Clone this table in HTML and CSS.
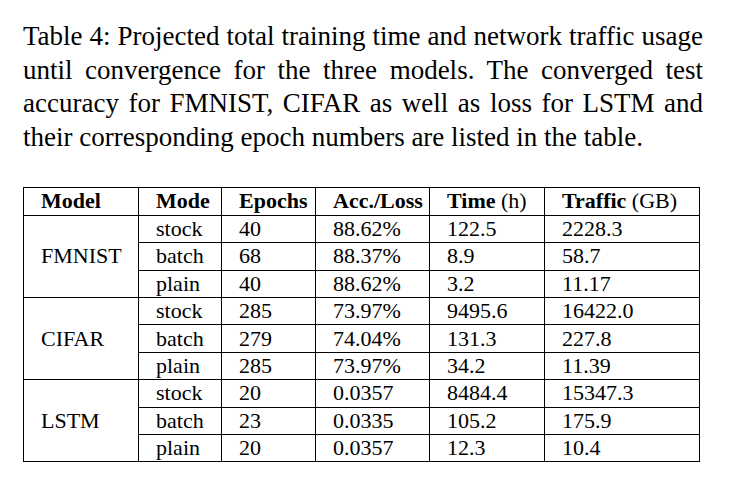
FILE: index.html
```html
<!DOCTYPE html>
<html>
<head>
<meta charset="utf-8">
<link rel="stylesheet" href="styles.css">
</head>
<body>
<div class="page">
  <p class="caption">Table 4: Projected total training time and network traffic usage until convergence for the three models. The converged test accuracy for FMNIST, CIFAR as well as loss for LSTM and their corresponding epoch numbers are listed in the table.</p>
  <table class="results">
    <colgroup>
      <col class="c-model"><col class="c-mode"><col class="c-epochs"><col class="c-acc"><col class="c-time"><col class="c-traffic">
    </colgroup>
    <thead>
      <tr class="head">
        <th>Model</th><th>Mode</th><th>Epochs</th><th>Acc./Loss</th><th>Time <span class="unit">(h)</span></th><th>Traffic <span class="unit">(GB)</span></th>
      </tr>
    </thead>
    <tbody>
      <tr><td rowspan="3" class="model">FMNIST</td><td>stock</td><td>40</td><td>88.62%</td><td>122.5</td><td>2228.3</td></tr>
      <tr><td>batch</td><td>68</td><td>88.37%</td><td>8.9</td><td>58.7</td></tr>
      <tr><td>plain</td><td>40</td><td>88.62%</td><td>3.2</td><td>11.17</td></tr>
      <tr><td rowspan="3" class="model">CIFAR</td><td>stock</td><td>285</td><td>73.97%</td><td>9495.6</td><td>16422.0</td></tr>
      <tr><td>batch</td><td>279</td><td>74.04%</td><td>131.3</td><td>227.8</td></tr>
      <tr><td>plain</td><td>285</td><td>73.97%</td><td>34.2</td><td>11.39</td></tr>
      <tr><td rowspan="3" class="model">LSTM</td><td>stock</td><td>20</td><td>0.0357</td><td>8484.4</td><td>15347.3</td></tr>
      <tr><td>batch</td><td>23</td><td>0.0335</td><td>105.2</td><td>175.9</td></tr>
      <tr><td>plain</td><td>20</td><td>0.0357</td><td>12.3</td><td>10.4</td></tr>
    </tbody>
  </table>
</div>
</body>
</html>
```

FILE: styles.css
```css
html, body {
  margin: 0;
  padding: 0;
  background: #fff;
}

body {
  font-family: "Liberation Serif", "Times New Roman", serif;
  color: #000;
}

.page {
  padding: 20px 0 0 23px;
}

.caption {
  margin: 0;
  width: 680px;
  font-size: 27px;
  line-height: 33.7px;
  text-align: justify;
}

.results {
  margin-top: 32px;
  border-collapse: collapse;
  table-layout: fixed;
  width: 676px;
  font-size: 22px;
}

.c-model { width: 115px; }
.c-mode { width: 83px; }
.c-epochs { width: 94px; }
.c-acc { width: 114px; }
.c-time { width: 115px; }
.c-traffic { width: 155px; }

.results th,
.results td {
  border: 1px solid #000;
  padding: 0 0 0 17px;
  text-align: left;
  vertical-align: middle;
  line-height: 26px;
  white-space: nowrap;
}

.results th {
  font-weight: bold;
}

.results .unit {
  font-weight: normal;
}

.results tr.head {
  height: 28px;
}

.results tbody tr {
  height: 27.4px;
}
```
